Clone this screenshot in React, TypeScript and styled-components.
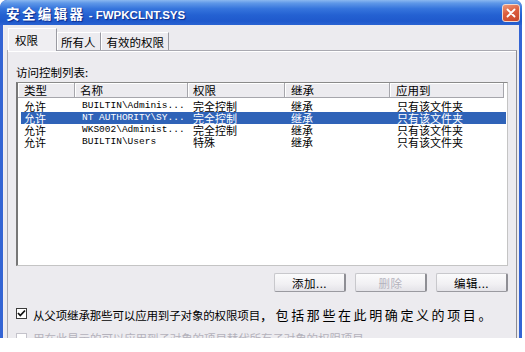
import React from "react";
import styled, { createGlobalStyle } from "styled-components";

const GlobalStyle = createGlobalStyle`
  html, body { margin: 0; padding: 0; background: #ffffff; }
  body { font-family: "Noto Sans CJK SC", "Noto Sans", sans-serif; }
  * { box-sizing: border-box; }
`;

const CJK = `"Noto Sans CJK SC", "Noto Sans", sans-serif`;
const MONO = `"Liberation Mono", "DejaVu Sans Mono", monospace`;

const Window = styled.div`
  width: 522px;
  height: 338px;
  overflow: hidden;
  display: flex;
  flex-direction: column;
  background: #3464d4;
  border-radius: 7px 7px 0 0;
`;

const TitleBar = styled.div`
  height: 25px;
  flex: none;
  display: flex;
  align-items: center;
  justify-content: space-between;
  padding: 0 2px 0 6px;
  background: linear-gradient(
    180deg,
    #8bb8f0 0%,
    #5f98e8 12%,
    #3574dc 35%,
    #2461d2 60%,
    #1f59cc 85%,
    #2a63d2 100%
  );
  border-radius: 7px 7px 0 0;
`;

const Title = styled.div`
  color: #ffffff;
  font-weight: 700;
  white-space: nowrap;
  text-shadow: 1px 1px 1px #0c2a8a;
  display: flex;
  align-items: baseline;
`;

const TitleCJK = styled.span`
  font-family: ${CJK};
  font-size: 13.5px;
  letter-spacing: 2.4px;
`;

const TitleLatin = styled.span`
  font-family: "Liberation Sans", Arial, sans-serif;
  font-size: 11.5px;
  white-space: pre;
`;

const CloseBtn = styled.div`
  width: 18px;
  height: 18px;
  border-radius: 3px;
  border: 1px solid #f4d8cc;
  background: linear-gradient(160deg, #ee9a7c 0%, #dc5e3e 45%, #c8462a 100%);
  display: flex;
  align-items: center;
  justify-content: center;
  margin-top: 1px;
`;

const Body = styled.div`
  flex: 1;
  margin: 0 3px;
  background: #ecebef;
  border-left: 1px solid #f3eef1;
  padding: 3px 2px 0 3px;
  display: flex;
  flex-direction: column;
`;

const TabRow = styled.div`
  display: flex;
  align-items: flex-end;
  height: 22px;
  padding-left: 1px;
  position: relative;
  z-index: 1;
`;

const Tab = styled.div<{ $active?: boolean; $pl: number; $pr: number }>`
  height: ${(p) => (p.$active ? 23 : 18)}px;
  margin-bottom: ${(p) => (p.$active ? -1 : 0)}px;
  padding: ${(p) => (p.$active ? 4 : 2)}px ${(p) => p.$pr}px 0 ${(p) => p.$pl}px;
  font-family: ${CJK};
  font-size: 11.5px;
  line-height: 14px;
  color: #000;
  background: ${(p) => (p.$active ? "#efeef2" : "#ecebef")};
  border-top: 1px solid #ffffff;
  border-left: 1px solid #ffffff;
  border-right: 1px solid #9a9aa2;
  white-space: nowrap;
`;

const Panel = styled.div`
  flex: 1;
  border: 1px solid #a9a9b1;
  border-right-color: #8b8b93;
  border-bottom: none;
  box-shadow: inset 0 1px 0 #ffffff;
  padding: 14px 8px 0 8px;
  display: flex;
  flex-direction: column;
`;

const Label = styled.div`
  font-family: ${CJK};
  font-size: 11.5px;
  line-height: 14px;
  color: #000;
`;

const ListBox = styled.div`
  margin-top: 3px;
  height: 184px;
  background: #ffffff;
  border: 1px solid #c4c4c4;
  border-left: 2px solid #777777;
  border-top: 1px solid #8a8a8a;
  display: flex;
  flex-direction: column;
`;

const cols = "57px 113px 97px 105px 114px";

const HeaderRow = styled.div`
  display: grid;
  grid-template-columns: ${cols};
  height: 15px;
  flex: none;
`;

const HeaderCell = styled.div<{ $pl: number }>`
  background: #ecebef;
  border-right: 1px solid #a6a6ac;
  border-bottom: 1px solid #a6a6ac;
  box-shadow: inset 1px 1px 0 #ffffff;
  font-family: ${CJK};
  font-size: 11.5px;
  line-height: 14px;
  padding-left: ${(p) => p.$pl}px;
  color: #000;
  white-space: nowrap;
`;

const Rows = styled.div`
  padding-top: 2px;
  display: flex;
  flex-direction: column;
`;

const Row = styled.div<{ $selected?: boolean }>`
  display: grid;
  grid-template-columns: 54px 113px 97px 105px 116px;
  margin-left: 3px;
  width: 485px;
  height: 12px;
  background: ${(p) => (p.$selected ? "#2f63b8" : "transparent")};
  color: ${(p) => (p.$selected ? "#ffffff" : "#000000")};
`;

const Cell = styled.div<{ $mono?: boolean; $pl: number }>`
  font-family: ${(p) => (p.$mono ? MONO : CJK)};
  font-size: ${(p) => (p.$mono ? 9.5 : 11)}px;
  line-height: 12px;
  height: 12px;
  padding-left: ${(p) => p.$pl}px;
  white-space: nowrap;
`;

const ButtonRow = styled.div`
  margin-top: 7px;
  display: flex;
  justify-content: flex-end;
  gap: 9px;
`;

const Button = styled.div<{ $disabled?: boolean }>`
  width: 72px;
  height: 19px;
  display: flex;
  align-items: center;
  justify-content: center;
  font-family: ${CJK};
  font-size: 11.5px;
  color: ${(p) => (p.$disabled ? "#b4b2bc" : "#000")};
  background: linear-gradient(180deg, #fbfbfc 0%, #f1f0f3 60%, #e4e3e8 100%);
  border: 1px solid #c8c8cc;
  border-right: 2px solid #8e8e94;
  border-bottom: 1px solid #9a9aa0;
  border-radius: 2px;
  letter-spacing: 0.5px;
`;

const CheckRow = styled.div<{ $disabled?: boolean; $mt: number }>`
  margin-top: ${(p) => p.$mt}px;
  display: flex;
  align-items: center;
  gap: 6px;
  height: 14px;
  color: ${(p) => (p.$disabled ? "#b4b2bc" : "#000")};
  white-space: nowrap;
`;

const Box = styled.div<{ $disabled?: boolean }>`
  width: 11px;
  height: 11px;
  flex: none;
  background: #ffffff;
  border: 1px solid ${(p) => (p.$disabled ? "#c4c3cb" : "#3b3b3b")};
  display: flex;
  align-items: center;
  justify-content: center;
`;

const CheckText = styled.span<{ $size: number; $ls: number }>`
  font-family: ${CJK};
  font-size: ${(p) => p.$size}px;
  letter-spacing: ${(p) => p.$ls}px;
  line-height: 14px;
`;

type Entry = { type: string; name: string; perm: string; inh: string; apply: string };

const entries: Entry[] = [
  { type: "允许", name: "BUILTIN\\Adminis...", perm: "完全控制", inh: "继承", apply: "只有该文件夹" },
  { type: "允许", name: "NT AUTHORITY\\SY...", perm: "完全控制", inh: "继承", apply: "只有该文件夹" },
  { type: "允许", name: "WKS002\\Administ...", perm: "完全控制", inh: "继承", apply: "只有该文件夹" },
  { type: "允许", name: "BUILTIN\\Users", perm: "特殊", inh: "继承", apply: "只有该文件夹" },
];

export default function App() {
  return (
    <>
      <GlobalStyle />
      <Window>
        <TitleBar>
          <Title>
            <TitleCJK>安全编辑器</TitleCJK>
            <TitleLatin>{" - FWPKCLNT.SYS"}</TitleLatin>
          </Title>
          <CloseBtn>
            <svg width="10" height="10" viewBox="0 0 10 10">
              <path d="M1.5 1.5 L8.5 8.5 M8.5 1.5 L1.5 8.5" stroke="#ffffff" strokeWidth="1.8" strokeLinecap="round" />
            </svg>
          </CloseBtn>
        </TitleBar>
        <Body>
          <TabRow>
            <Tab $active $pl={6} $pr={18}>权限</Tab>
            <Tab $pl={3} $pr={4}>所有人</Tab>
            <Tab $pl={5} $pr={4}>有效的权限</Tab>
          </TabRow>
          <Panel>
            <Label>访问控制列表:</Label>
            <ListBox>
              <HeaderRow>
                <HeaderCell $pl={6}>类型</HeaderCell>
                <HeaderCell $pl={5}>名称</HeaderCell>
                <HeaderCell $pl={5}>权限</HeaderCell>
                <HeaderCell $pl={6}>继承</HeaderCell>
                <HeaderCell $pl={6}>应用到</HeaderCell>
              </HeaderRow>
              <Rows>
                {entries.map((e, i) => (
                  <Row key={i} $selected={i === 1}>
                    <Cell $pl={3}>{e.type}</Cell>
                    <Cell $mono $pl={7}>{e.name}</Cell>
                    <Cell $pl={5}>{e.perm}</Cell>
                    <Cell $pl={6}>{e.inh}</Cell>
                    <Cell $pl={7}>{e.apply}</Cell>
                  </Row>
                ))}
              </Rows>
            </ListBox>
            <ButtonRow>
              <Button>添加...</Button>
              <Button $disabled>删除</Button>
              <Button>编辑...</Button>
            </ButtonRow>
            <CheckRow $mt={14}>
              <Box>
                <svg width="9" height="9" viewBox="0 0 9 9">
                  <path d="M1 4 L3.3 6.5 L8 1.5" fill="none" stroke="#111" strokeWidth="1.8" />
                </svg>
              </Box>
              <span>
                <CheckText $size={11.5} $ls={-0.15}>从父项继承那些可以应用到子对象的权限项目</CheckText>
                <CheckText $size={13} $ls={2.6}>，包括那些在此明确定义的项目。</CheckText>
              </span>
            </CheckRow>
            <CheckRow $disabled $mt={11}>
              <Box $disabled />
              <CheckText $size={11.5} $ls={-0.1}>用在此显示的可以应用到子对象的项目替代所有子对象的权限项目</CheckText>
            </CheckRow>
          </Panel>
        </Body>
      </Window>
    </>
  );
}
